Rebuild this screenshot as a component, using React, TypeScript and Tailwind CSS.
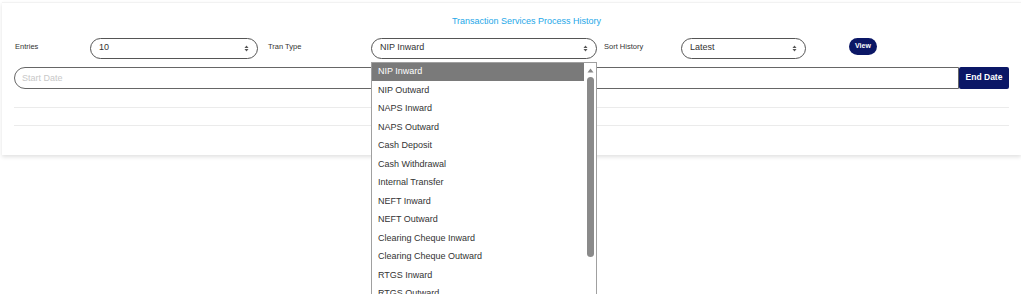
import { useState } from 'react';

const tranTypes = [
  'NIP Inward',
  'NIP Outward',
  'NAPS Inward',
  'NAPS Outward',
  'Cash Deposit',
  'Cash Withdrawal',
  'Internal Transfer',
  'NEFT Inward',
  'NEFT Outward',
  'Clearing Cheque Inward',
  'Clearing Cheque Outward',
  'RTGS Inward',
  'RTGS Outward',
  'Others',
];

function Arrows() {
  return (
    <svg width="5" height="7" viewBox="0 0 5 7" className="shrink-0">
      <path d="M2.5 0.5 L4.5 3 L0.5 3 Z" fill="#555" />
      <path d="M2.5 6.5 L4.5 4 L0.5 4 Z" fill="#555" />
    </svg>
  );
}

function FakeSelect({ value, width }: { value: string; width: string }) {
  return (
    <div
      className={`${width} h-[21px] shrink-0 rounded-full border border-[#555] bg-white flex items-center justify-between pl-[8px] pr-[8px] text-[9px] text-[#333]`}
    >
      <span>{value}</span>
      <Arrows />
    </div>
  );
}

export default function App() {
  const [selected] = useState('NIP Inward');

  return (
    <div
      className="min-h-screen bg-white pt-[2px] pl-[2px] overflow-hidden"
      style={{ fontFamily: '"Liberation Sans", Arial, sans-serif' }}
    >
      <div className="bg-white border-t border-[#f2f2f2] shadow-[0_2px_4px_rgba(0,0,0,0.12)] pl-[12px] pr-[12px] pb-[30px] h-[153px]">
        {/* Title */}
        <div className="pl-[30px] pt-[12px] text-center text-[9px] text-[#1ea7e8]">
          Transaction Services Process History
        </div>

        {/* Filters */}
        <div className="mt-[9px] flex items-start">
          <div className="w-[76px] pt-[3px] pl-[1px] text-[7.5px] text-[#333]">Entries</div>
          <FakeSelect value="10" width="w-[168px]" />
          <div className="w-[113px] pl-[10px] pt-[3px] text-[7.5px] text-[#333]">Tran Type</div>
          <div className="relative">
            <FakeSelect value={selected} width="w-[226px]" />
            {/* Open dropdown */}
            <div className="absolute left-0 top-[24px] z-10 w-[226px] h-[240px] border border-[#a0a0a0] bg-white flex">
              <div className="flex-1">
                {tranTypes.map((t) => (
                  <div
                    key={t}
                    className={`h-[18.5px] pl-[6px] flex items-center text-[9px] ${
                      t === selected ? 'bg-[#7a7a7a] text-white' : 'text-[#333]'
                    }`}
                  >
                    {t}
                  </div>
                ))}
              </div>
              <div className="w-[12px] flex flex-col items-center pt-[5px]">
                <svg width="7" height="5" viewBox="0 0 7 5">
                  <path d="M3.5 0.5 L6.5 4.5 L0.5 4.5 Z" fill="#888" />
                </svg>
                <div className="mt-[4px] w-[7px] h-[180px] rounded-full bg-[#8a8a8a]" />
              </div>
            </div>
          </div>
          <div className="w-[84px] pl-[7px] pt-[3px] text-[7.5px] text-[#333]">Sort History</div>
          <FakeSelect value="Latest" width="w-[125px]" />
          <button className="ml-[43px] h-[17px] px-[6px] rounded-full bg-[#0b1766] text-white text-[7px] font-bold">
            View
          </button>
        </div>

        {/* Date range */}
        <div className="mt-[8px] flex">
          <input
            placeholder="Start Date"
            className="flex-1 h-[22px] rounded-l-full border border-[#666] pl-[7px] text-[9px] text-[#333] placeholder:text-[#c8c8c8] outline-none"
          />
          <button className="w-[50px] h-[22px] bg-[#0b1766] text-white text-[8.5px] font-bold rounded-[2px]">
            End Date
          </button>
        </div>

        {/* Table rules */}
        <div className="mt-[18px] border-t border-[#ebebeb]" />
        <div className="mt-[17px] border-t border-[#ebebeb]" />
      </div>
    </div>
  );
}
